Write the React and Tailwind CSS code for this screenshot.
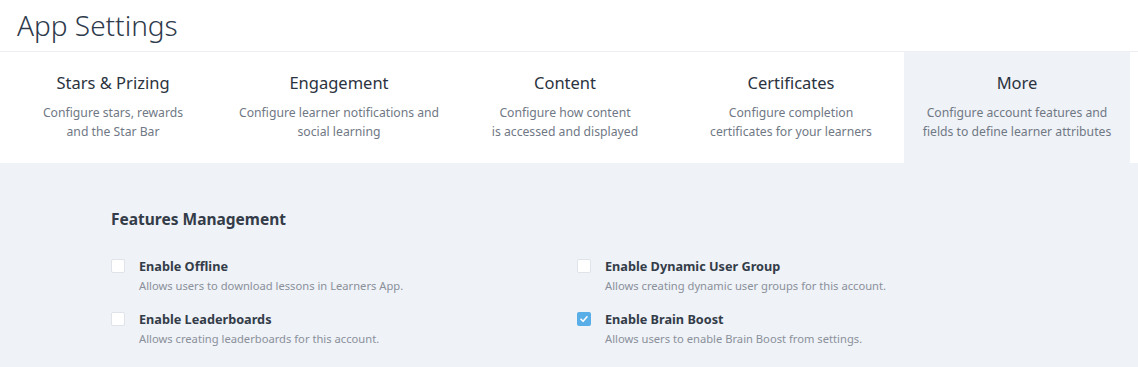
import React from 'react';

const tabs = [
  { title: 'Stars & Prizing', desc: ['Configure stars, rewards', 'and the Star Bar'] },
  { title: 'Engagement', desc: ['Configure learner notifications and', 'social learning'] },
  { title: 'Content', desc: ['Configure how content', 'is accessed and displayed'] },
  { title: 'Certificates', desc: ['Configure completion', 'certificates for your learners'] },
  { title: 'More', desc: ['Configure account features and', 'fields to define learner attributes'], active: true },
];

const features = [
  { label: 'Enable Offline', desc: 'Allows users to download lessons in Learners App.' },
  { label: 'Enable Dynamic User Group', desc: 'Allows creating dynamic user groups for this account.' },
  { label: 'Enable Leaderboards', desc: 'Allows creating leaderboards for this account.' },
  { label: 'Enable Brain Boost', desc: 'Allows users to enable Brain Boost from settings.', checked: true },
];

const Checkbox = ({ checked }) =>
  checked ? (
    <span className="mt-[2px] flex h-[14px] w-[14px] shrink-0 items-center justify-center rounded-[2px] bg-[#5aaee8]">
      <svg width="10" height="10" viewBox="0 0 10 10" fill="none">
        <path d="M2 5.2 L4.1 7.3 L8 2.8" stroke="white" strokeWidth="1.6" strokeLinecap="round" strokeLinejoin="round" />
      </svg>
    </span>
  ) : (
    <span className="mt-[2px] h-[14px] w-[14px] shrink-0 rounded-[2px] border border-[#dfe3ea] bg-white" />
  );

const App = () => {
  return (
    <div className="h-[367px] w-[1138px] overflow-hidden bg-[#eff2f7] font-['Noto_Sans',sans-serif]">
      <header className="h-[52px] border-b border-[#eceef2] bg-white pl-[17px] pt-[7px]">
        <h1 className="text-[28px] font-light leading-[36px] text-[#2e3a4b]">App Settings</h1>
      </header>

      <nav className="flex h-[111px] bg-white pr-[8px]">
        {tabs.map((t) => (
          <div
            key={t.title}
            className={`flex w-[226px] flex-col items-center pt-[19px] text-center ${t.active ? 'bg-[#eff2f7]' : ''}`}
          >
            <div className="text-[16.5px] leading-[24px] text-[#2b3340]">{t.title}</div>
            <div className="mt-[8px] text-[12.2px] leading-[19px] text-[#707885]">
              {t.desc.map((d) => (
                <div key={d}>{d}</div>
              ))}
            </div>
          </div>
        ))}
      </nav>

      <section className="pl-[111px] pt-[44px]">
        <h2 className="text-[15.5px] font-bold leading-[24px] text-[#333c48]">Features Management</h2>
        <div className="mt-[26px] grid w-[900px] grid-cols-[466px_1fr] gap-y-[16px]">
          {features.map((f) => (
            <div key={f.label} className="flex gap-[14px]">
              <Checkbox checked={f.checked} />
              <div>
                <div className="text-[12.7px] font-bold leading-[18px] text-[#333c48]">{f.label}</div>
                <div className="mt-[2px] text-[11.2px] leading-[17px] text-[#8a909a]">{f.desc}</div>
              </div>
            </div>
          ))}
        </div>
      </section>
    </div>
  );
};

export default App;
